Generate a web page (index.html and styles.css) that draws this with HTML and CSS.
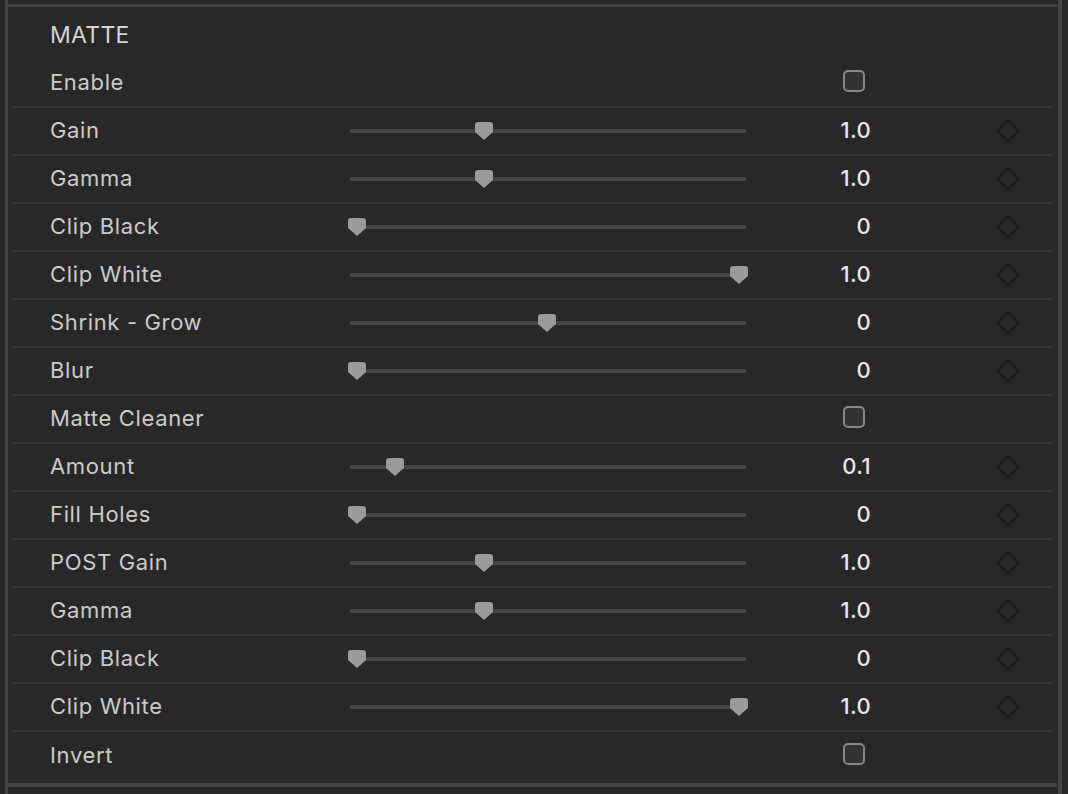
FILE: index.html
```html
<!DOCTYPE html>
<html>
<head>
<meta charset="utf-8">
<link rel="stylesheet" href="styles.css">
</head>
<body>
<div class="page">
  <div class="vbar-left"></div>
  <div class="col">
    <div class="hbar-top"></div>
    <div class="content">
      <div class="header">MATTE</div>

      <div class="row">
        <div class="label">Enable</div>
        <div class="empty"></div>
        <div class="value"><span class="check"></span></div>
      </div>

      <div class="row">
        <div class="label">Gain</div>
        <div class="slider"><div class="track"><svg class="thumb" style="left:125px" viewBox="0 0 18 18" width="18" height="18"><path d="M3 0H15Q18 0 18 3V10L9 18L0 10V3Q0 0 3 0Z"/></svg></div></div>
        <div class="value">1.0</div>
        <svg class="key" viewBox="0 0 24 24" width="24" height="24"><path d="M12 1.5L22.5 12L12 22.5L1.5 12Z"/></svg>
      </div>

      <div class="row">
        <div class="label">Gamma</div>
        <div class="slider"><div class="track"><svg class="thumb" style="left:125px" viewBox="0 0 18 18" width="18" height="18"><path d="M3 0H15Q18 0 18 3V10L9 18L0 10V3Q0 0 3 0Z"/></svg></div></div>
        <div class="value">1.0</div>
        <svg class="key" viewBox="0 0 24 24" width="24" height="24"><path d="M12 1.5L22.5 12L12 22.5L1.5 12Z"/></svg>
      </div>

      <div class="row">
        <div class="label">Clip Black</div>
        <div class="slider"><div class="track"><svg class="thumb" style="left:-2px" viewBox="0 0 18 18" width="18" height="18"><path d="M3 0H15Q18 0 18 3V10L9 18L0 10V3Q0 0 3 0Z"/></svg></div></div>
        <div class="value">0</div>
        <svg class="key" viewBox="0 0 24 24" width="24" height="24"><path d="M12 1.5L22.5 12L12 22.5L1.5 12Z"/></svg>
      </div>

      <div class="row">
        <div class="label">Clip White</div>
        <div class="slider"><div class="track"><svg class="thumb" style="left:380px" viewBox="0 0 18 18" width="18" height="18"><path d="M3 0H15Q18 0 18 3V10L9 18L0 10V3Q0 0 3 0Z"/></svg></div></div>
        <div class="value">1.0</div>
        <svg class="key" viewBox="0 0 24 24" width="24" height="24"><path d="M12 1.5L22.5 12L12 22.5L1.5 12Z"/></svg>
      </div>

      <div class="row">
        <div class="label">Shrink - Grow</div>
        <div class="slider"><div class="track"><svg class="thumb" style="left:188px" viewBox="0 0 18 18" width="18" height="18"><path d="M3 0H15Q18 0 18 3V10L9 18L0 10V3Q0 0 3 0Z"/></svg></div></div>
        <div class="value">0</div>
        <svg class="key" viewBox="0 0 24 24" width="24" height="24"><path d="M12 1.5L22.5 12L12 22.5L1.5 12Z"/></svg>
      </div>

      <div class="row">
        <div class="label">Blur</div>
        <div class="slider"><div class="track"><svg class="thumb" style="left:-2px" viewBox="0 0 18 18" width="18" height="18"><path d="M3 0H15Q18 0 18 3V10L9 18L0 10V3Q0 0 3 0Z"/></svg></div></div>
        <div class="value">0</div>
        <svg class="key" viewBox="0 0 24 24" width="24" height="24"><path d="M12 1.5L22.5 12L12 22.5L1.5 12Z"/></svg>
      </div>

      <div class="row">
        <div class="label">Matte Cleaner</div>
        <div class="empty"></div>
        <div class="value"><span class="check"></span></div>
      </div>

      <div class="row">
        <div class="label">Amount</div>
        <div class="slider"><div class="track"><svg class="thumb" style="left:36px" viewBox="0 0 18 18" width="18" height="18"><path d="M3 0H15Q18 0 18 3V10L9 18L0 10V3Q0 0 3 0Z"/></svg></div></div>
        <div class="value">0.1</div>
        <svg class="key" viewBox="0 0 24 24" width="24" height="24"><path d="M12 1.5L22.5 12L12 22.5L1.5 12Z"/></svg>
      </div>

      <div class="row">
        <div class="label">Fill Holes</div>
        <div class="slider"><div class="track"><svg class="thumb" style="left:-2px" viewBox="0 0 18 18" width="18" height="18"><path d="M3 0H15Q18 0 18 3V10L9 18L0 10V3Q0 0 3 0Z"/></svg></div></div>
        <div class="value">0</div>
        <svg class="key" viewBox="0 0 24 24" width="24" height="24"><path d="M12 1.5L22.5 12L12 22.5L1.5 12Z"/></svg>
      </div>

      <div class="row">
        <div class="label">POST Gain</div>
        <div class="slider"><div class="track"><svg class="thumb" style="left:125px" viewBox="0 0 18 18" width="18" height="18"><path d="M3 0H15Q18 0 18 3V10L9 18L0 10V3Q0 0 3 0Z"/></svg></div></div>
        <div class="value">1.0</div>
        <svg class="key" viewBox="0 0 24 24" width="24" height="24"><path d="M12 1.5L22.5 12L12 22.5L1.5 12Z"/></svg>
      </div>

      <div class="row">
        <div class="label">Gamma</div>
        <div class="slider"><div class="track"><svg class="thumb" style="left:125px" viewBox="0 0 18 18" width="18" height="18"><path d="M3 0H15Q18 0 18 3V10L9 18L0 10V3Q0 0 3 0Z"/></svg></div></div>
        <div class="value">1.0</div>
        <svg class="key" viewBox="0 0 24 24" width="24" height="24"><path d="M12 1.5L22.5 12L12 22.5L1.5 12Z"/></svg>
      </div>

      <div class="row">
        <div class="label">Clip Black</div>
        <div class="slider"><div class="track"><svg class="thumb" style="left:-2px" viewBox="0 0 18 18" width="18" height="18"><path d="M3 0H15Q18 0 18 3V10L9 18L0 10V3Q0 0 3 0Z"/></svg></div></div>
        <div class="value">0</div>
        <svg class="key" viewBox="0 0 24 24" width="24" height="24"><path d="M12 1.5L22.5 12L12 22.5L1.5 12Z"/></svg>
      </div>

      <div class="row">
        <div class="label">Clip White</div>
        <div class="slider"><div class="track"><svg class="thumb" style="left:380px" viewBox="0 0 18 18" width="18" height="18"><path d="M3 0H15Q18 0 18 3V10L9 18L0 10V3Q0 0 3 0Z"/></svg></div></div>
        <div class="value">1.0</div>
        <svg class="key" viewBox="0 0 24 24" width="24" height="24"><path d="M12 1.5L22.5 12L12 22.5L1.5 12Z"/></svg>
      </div>

      <div class="row last">
        <div class="label">Invert</div>
        <div class="empty"></div>
        <div class="value"><span class="check"></span></div>
      </div>
    </div>
    <div class="hbar-bottom"></div>
  </div>
  <div class="vbar-right"></div>
</div>
</body>
</html>
```
FILE: styles.css
```css
html, body {
  margin: 0;
  padding: 0;
  background: #282828;
}
body {
  font-family: Inter, "Liberation Sans", sans-serif;
  color: #cdcdcd;
}
.page {
  display: flex;
  height: 794px;
  width: 1068px;
  overflow: hidden;
}
.vbar-left {
  width: 3px;
  margin-left: 5px;
  background: #444444;
  flex: none;
}
.vbar-right {
  width: 4px;
  background: #444444;
  flex: none;
}
.col {
  flex: none;
  width: 1049px;
  margin-right: 1px;
  padding-top: 4px;
  display: flex;
  flex-direction: column;
}
.hbar-top {
  height: 3px;
  background: #444444;
}
.hbar-bottom {
  height: 4px;
  background: #444444;
}
.content {
  height: 776px;
}
.header {
  height: 53px;
  box-sizing: border-box;
  padding-left: 42px;
  padding-top: 14px;
  font-size: 23px;
  line-height: 28px;
  color: #d4d4d4;
  letter-spacing: 0.3px;
}
.row {
  height: 48px;
  box-sizing: border-box;
  margin: 0 4px;
  border-bottom: 2px solid #323232;
  display: grid;
  grid-template-columns: 338px 396px 125px 1fr;
  align-items: center;
}
.row.last {
  border-bottom: none;
}
.label {
  padding-left: 38px;
  font-size: 22px;
  line-height: 44px;
  margin-bottom: 2px;
  letter-spacing: 0.65px;
  color: #cbcbcb;
}
.slider {
  height: 46px;
  display: flex;
  align-items: center;
}
.track {
  position: relative;
  width: 396px;
  height: 4px;
  border-radius: 2px;
  background: #464646;
}
.thumb {
  position: absolute;
  top: -7px;
  fill: #9a9a9a;
}
.value {
  text-align: right;
  font-size: 22px;
  font-weight: 500;
  letter-spacing: 0.4px;
  color: #e6e6e6;
  line-height: 44px;
  margin-bottom: 2px;
  display: flex;
  justify-content: flex-end;
  align-items: center;
  height: 44px;
}
.check {
  width: 22px;
  height: 22px;
  box-sizing: border-box;
  border: 2px solid #878787;
  border-radius: 5px;
  background: #333333;
  margin-right: 6px;
  margin-top: -2px;
}
.key {
  justify-self: start;
  margin-left: 125px;
  fill: none;
  stroke: #1b1b1b;
  stroke-width: 2;
}
```
